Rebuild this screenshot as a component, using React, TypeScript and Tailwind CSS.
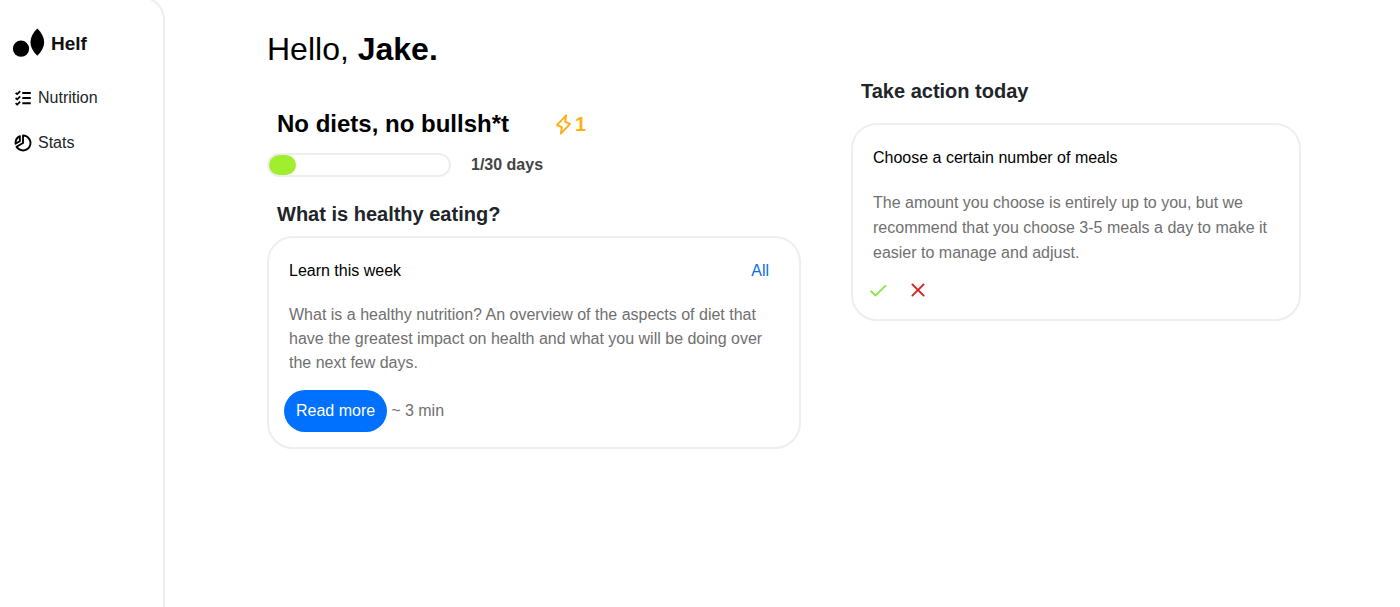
import { PiChartPieSliceBold, PiCheckBold, PiLightningBold, PiXBold } from "react-icons/pi";

function Logo() {
  return (
    <svg viewBox="0 0 32 32" className="size-8" aria-hidden="true">
      <circle cx="8" cy="20.7" r="8.1" fill="#000" />
      <path d="M24.3 0.6C33.4 9.5 33.4 19 24.3 27.8C15.2 19 15.2 9.5 24.3 0.6Z" fill="#000" />
    </svg>
  );
}

function ChecklistIcon() {
  return (
    <svg viewBox="0 0 20 20" className="size-5" fill="none" stroke="#000" aria-hidden="true">
      <path d="M9.3 5H17.8M9.3 10.1H17.8M9.3 15.2H17.8" strokeWidth="2" />
      <path
        d="M2.6 4.8L4.2 6.2L7.2 3.2M2.6 10L4.2 11.4L7.2 8.4M2.6 15.2L4.2 16.6L7.2 13.6"
        strokeWidth="1.7"
      />
    </svg>
  );
}

function Sidebar() {
  return (
    <aside className="-mt-1 w-[165px] shrink-0 rounded-tr-3xl border-t-2 border-r-2 border-[#eeeeee] pt-[30px] pl-[13px]">
      <a href="#home" className="flex items-center gap-[6px]">
        <Logo />
        <span className="text-[19px]/[32px] font-bold text-[#111111]">Helf</span>
      </a>
      <nav className="mt-[26px] flex flex-col gap-[21px] text-base text-[#212529]">
        <a href="#nutrition" className="flex items-center gap-[5px]">
          <ChecklistIcon />
          Nutrition
        </a>
        <a href="#stats" className="flex items-center gap-[5px]">
          <PiChartPieSliceBold className="size-5 text-black" />
          Stats
        </a>
      </nav>
    </aside>
  );
}

export default function App() {
  return (
    <div className="flex min-h-screen bg-white font-['Liberation_Sans',Arial,sans-serif] text-base text-black">
      <Sidebar />
      <main className="grid flex-1 grid-cols-[534fr_450fr] items-start gap-[50px] pr-[99px] pl-[102px]">
        <section className="pt-[29px]">
          <h1 className="text-[32px]/[40px]">
            Hello, <b>Jake.</b>
          </h1>
          <div className="mt-[39px] flex items-center pl-[10px]">
            <h2 className="text-2xl font-bold">No diets, no bullsh*t</h2>
            <span className="ml-11 flex items-center gap-[1px] text-xl/[32px] font-bold text-[#fbb117]">
              <PiLightningBold className="size-[21px]" />1
            </span>
          </div>
          <div className="mt-[13px] flex items-center gap-5">
            <div
              role="progressbar"
              aria-label="Days completed"
              aria-valuenow={1}
              aria-valuemax={30}
              className="h-6 w-[184px] rounded-full border-2 border-[#eeeeee]"
            >
              <div className="h-full w-[27px] rounded-full bg-[#a0ee2d]" />
            </div>
            <span className="font-bold text-[#444444]">1/30 days</span>
          </div>
          <h3 className="mt-[23px] pl-[10px] text-xl font-bold text-[#212529]">What is healthy eating?</h3>
          <article className="mt-2 rounded-[26px] border-2 border-[#eeeeee] px-5 pt-[21px] pb-[15px]">
            <div className="flex items-center justify-between pr-[10px]">
              <h4>Learn this week</h4>
              <a href="#all" className="text-[#0d6fdc]">All</a>
            </div>
            <p className="mt-5 text-[#707070]">
              What is a healthy nutrition? An overview of the aspects of diet that have the greatest impact on
              health and what you will be doing over the next few days.
            </p>
            <div className="mt-[15px] -ml-[5px] flex items-center gap-1">
              <button type="button" className="h-[42px] rounded-full bg-[#0070ff] px-3 text-white">
                Read more
              </button>
              <span className="text-[#707070]">~ 3 min</span>
            </div>
          </article>
        </section>
        <section className="pt-[77px]">
          <h3 className="pl-[10px] text-xl font-bold text-[#212529]">Take action today</h3>
          <article className="mt-[18px] rounded-[26px] border-2 border-[#eeeeee] px-5 pt-[21px] pb-[19px]">
            <h4>Choose a certain number of meals</h4>
            <p className="mt-5 leading-[25px] text-[#707070]">
              The amount you choose is entirely up to you, but we recommend that you choose 3-5 meals a day to
              make it easier to manage and adjust.
            </p>
            <div className="mt-[15px] -ml-[5px] flex gap-5">
              <button type="button" aria-label="Accept" className="text-[#92e648]">
                <PiCheckBold className="size-5" />
              </button>
              <button type="button" aria-label="Dismiss" className="text-[#d91c1c]">
                <PiXBold className="size-5" />
              </button>
            </div>
          </article>
        </section>
      </main>
    </div>
  );
}
